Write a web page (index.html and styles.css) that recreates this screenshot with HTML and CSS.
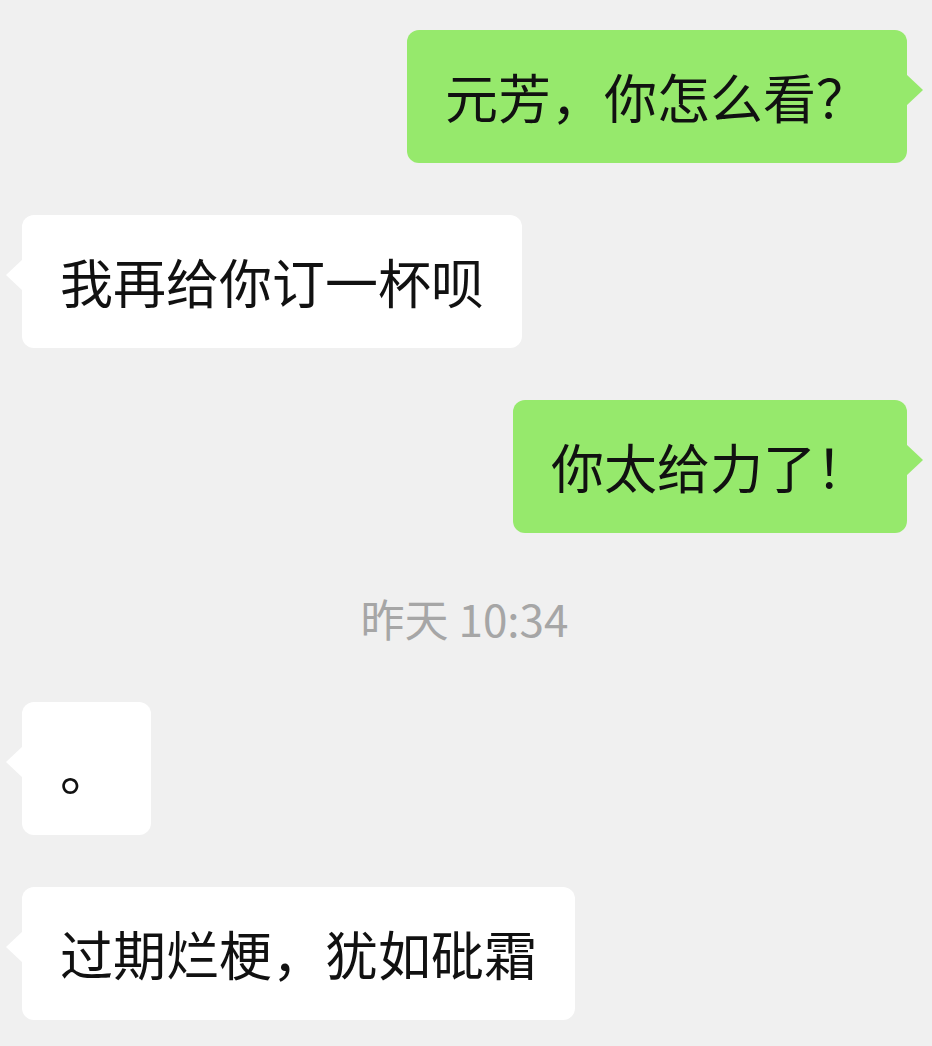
FILE: index.html
```html
<!DOCTYPE html>
<html lang="zh-CN">
<head>
  <meta charset="UTF-8">
  <meta name="viewport" content="width=device-width, initial-scale=1.0">
  <title>聊天记录</title>
  <link rel="stylesheet" href="styles.css">
</head>
<body>

  <main class="chat">
    <div class="row sent">
      <div class="bubble">元芳，你怎么看？</div>
    </div>

    <div class="row received">
      <div class="bubble">我再给你订一杯呗</div>
    </div>

    <div class="row sent">
      <div class="bubble">你太给力了！</div>
    </div>

    <p class="time">昨天 10:34</p>

    <div class="row received">
      <div class="bubble">。</div>
    </div>

    <div class="row received">
      <div class="bubble">过期烂梗，犹如砒霜</div>
    </div>
  </main>

</body>
</html>
```

FILE: styles.css
```css
body {
  margin: 0;
  padding: 0;
  background-color: #f0f0f0;
  color: #111;
  font-family: "Noto Sans CJK SC", "Noto Sans", sans-serif;
}
.chat {
  display: flex;
  flex-direction: column;
  padding: 30px 25px 0 22px;
}
.row {
  display: flex;
  margin-bottom: 52px;
}
.sent {
  justify-content: flex-end;
}
.received {
  justify-content: flex-start;
}
.bubble {
  position: relative;
  font-size: 53px;
  line-height: 73px;
  padding: 30px 38px;
  border-radius: 12px;
  background-color: #ffffff;
  white-space: nowrap;
}
.sent .bubble {
  background-color: #96e96c;
}
/* little pointer on the side of each bubble */
.bubble::after {
  content: "";
  position: absolute;
  top: 44px;
  width: 0;
  height: 0;
  border-top: 16px solid transparent;
  border-bottom: 16px solid transparent;
}
.sent .bubble::after {
  right: -16px;
  border-left: 17px solid #96e96c;
}
.received .bubble::after {
  left: -16px;
  border-right: 17px solid #ffffff;
}
.time {
  margin: 0 0 52px;
  padding: 8px 0 7px;
  text-align: center;
  font-size: 44px;
  line-height: 50px;
  color: #a6a6a6;
}
```
